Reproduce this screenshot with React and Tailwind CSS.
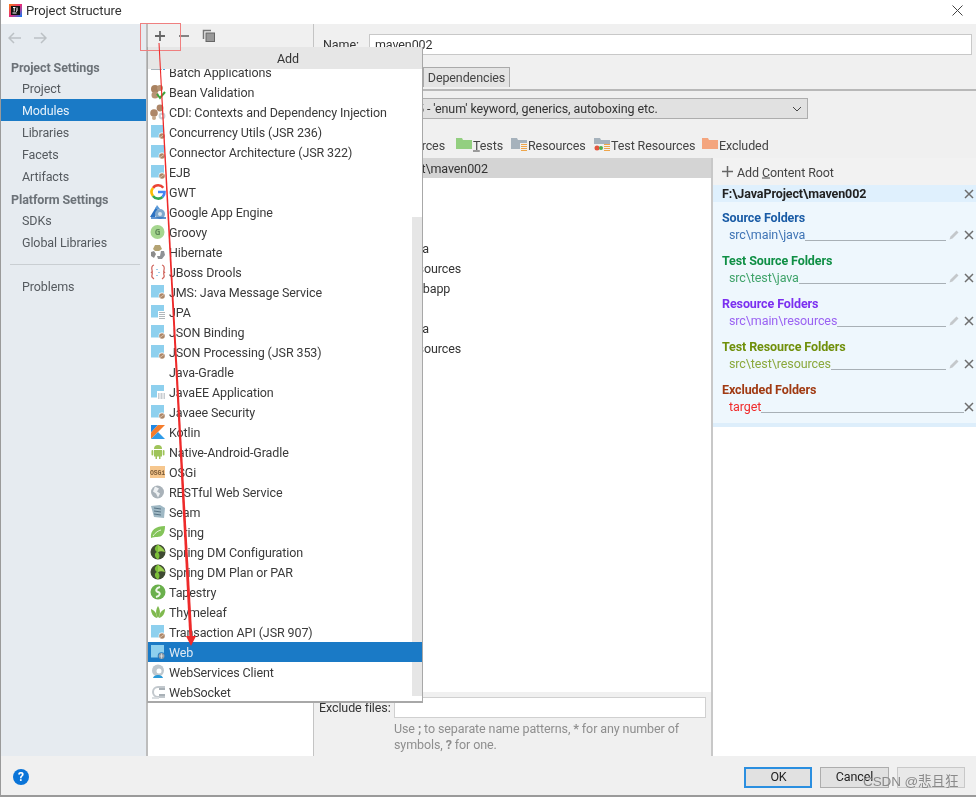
import React from "react";

const font = { fontFamily: 'Roboto,"Open Sans","Noto Sans","Liberation Sans",sans-serif' };

const Mod = ({ children }) => (
  <svg width="16" height="16" viewBox="0 0 16 16">
    <path d="M1 1h13v12.500H1z" fill="#8ed0ee" />
    {children || <g><circle cx="12" cy="12" r="3.400" fill="#fff" /><circle cx="12" cy="12" r="2.800" fill="#ad8668" /><path d="M10 13.500l4-3" stroke="#e8d8c8" strokeWidth=".7" /></g>}
  </svg>
);
const icons = {
  batch: <svg width="16" height="16" viewBox="0 0 16 16"><path d="M1 0h11v6H1z" fill="#a9b4bc" /><path d="M13 4h2v2h-2z" fill="#4aa8e0" /></svg>,
  bean: <svg width="16" height="16" viewBox="0 0 16 16"><circle cx="5" cy="5" r="4" fill="#a98260" /><circle cx="10" cy="4" r="3" fill="#b79474" /><circle cx="5" cy="11" r="3.500" fill="#b79474" /><path d="M7 10l3 4 5-6" fill="none" stroke="#3aa53a" strokeWidth="2" /></svg>,
  cdi: <svg width="16" height="16" viewBox="0 0 16 16"><circle cx="4" cy="9" r="3.800" fill="#ad8668" /><circle cx="10" cy="4" r="3.400" fill="#ad8668" /><circle cx="4" cy="14" r="2" fill="#c8a98c" /><circle cx="12" cy="12" r="3.400" fill="#c9d0d6" /><circle cx="12" cy="12" r="1.300" fill="#fff" /></svg>,
  mod: <Mod />,
  g: <svg width="16" height="16" viewBox="0 0 16 16" fill="none" strokeWidth="2.600"><path d="M13.300 3.700A6.500 6.500 0 0 0 3 4" stroke="#ea4335" /><path d="M3 4a6.500 6.500 0 0 0 0 8" stroke="#fbbc05" /><path d="M3 12a6.500 6.500 0 0 0 9.500 1" stroke="#34a853" /><path d="M12.500 13A6.500 6.500 0 0 0 14.500 8H8" stroke="#4285f4" /></svg>,
  gae: <svg width="17" height="16" viewBox="0 0 17 16"><path d="M0 13L6 3l2 3-3 7z" fill="#2b72c2" /><path d="M7 1l3 4H5z" fill="#5c9ad8" /><circle cx="10" cy="10" r="5" fill="#7ea7cc" /><circle cx="10" cy="10" r="2" fill="#d9e6f0" /><path d="M1 14h15" stroke="#2b72c2" strokeWidth="1.500" /></svg>,
  groovy: <svg width="16" height="16" viewBox="0 0 16 16"><circle cx="7.500" cy="8" r="7" fill="#a5d68f" /><text x="7.500" y="11" fontSize="8" fontWeight="700" fill="#5f8a58" textAnchor="middle" fontFamily="Open Sans">G</text></svg>,
  hib: <svg width="16" height="16" viewBox="0 0 16 16"><path d="M5 1h5l2 4-3 2H5L3 5z" fill="#b4a373" /><path d="M1 8l3-1 2 3-2 4-3-2z" fill="#8c8c8c" /><path d="M11 7h3l1 4-3 4H8l-1-3h3z" fill="#8f9296" /></svg>,
  drools: <svg width="16" height="16" viewBox="0 0 16 16" fill="none" strokeWidth="1.200"><path d="M4 1Q1 2 2 6T1 8q2 1 1 3t2 4" stroke="#d0645c" /><path d="M12 1q3 1 2 5t1 2q-2 1-1 3t-2 4" stroke="#d0645c" /><path d="M7 5v1M9 8v1M7 11v1" stroke="#5da9d6" /></svg>,
  jpa: <Mod><g><path d="M8 7h8v9H8z" fill="#fff" /><path d="M9 8.500h6M9 10.500h6M9 12.500h6M9 14.500h6" stroke="#b0b6ba" /></g></Mod>,
  none: <span />,
  jee: <Mod><g><path d="M7 7h9v9H7z" fill="#fff" /><path d="M8 9h7v6H8z" fill="#c8ccd0" /><path d="M10 9v6M13 9v6" stroke="#fff" /></g></Mod>,
  kotlin: <svg width="16" height="16" viewBox="0 0 16 16"><path d="M1 1h7L1 8.500z" fill="#1e88e5" /><path d="M8 1h7L1 15V8.500z" fill="#f57c2c" /><path d="M1 15l7-7 7 7z" fill="#2f9be8" /></svg>,
  android: <svg width="16" height="16" viewBox="0 0 16 16" fill="#9fc45a"><path d="M4 5a4 4 0 0 1 8 0z" /><path d="M4 6h8v6.500H10.500V15H9v-2.500H7V15H5.500v-2.500H4z" /><rect x="1.500" y="6" width="1.800" height="5.500" rx=".9" /><rect x="12.700" y="6" width="1.800" height="5.500" rx=".9" /></svg>,
  osgi: <svg width="16" height="16" viewBox="0 0 16 16"><rect x="0" y="2" width="15" height="12" fill="#f6c78e" /><text x="7.500" y="11" fontSize="6.500" fontWeight="700" fill="#7a5a35" textAnchor="middle" fontFamily="Liberation Mono">OSGi</text></svg>,
  globe: <svg width="16" height="16" viewBox="0 0 16 16"><circle cx="7.500" cy="8" r="6.500" fill="#a9b2b9" /><path d="M5 2.500l4 2-2 3 3 2-2 4-2-4-3-2z" fill="#eef1f3" /></svg>,
  seam: <svg width="17" height="16" viewBox="0 0 17 16"><path d="M1 2l9-1 5 3-1 10-10-1z" fill="#9fb8c4" /><path d="M4 4l7 1M4 7l7 1M4 10l7 1" stroke="#577384" strokeWidth="1" /></svg>,
  spring: <svg width="16" height="16" viewBox="0 0 16 16"><path d="M1 14C0 6 6 2 15 2c0 8-3 11-8 11-2 0-4 0-6 1z" fill="#84c45a" /><path d="M3 12c3-4 5-5 8-6" stroke="#eaf5e0" fill="none" /></svg>,
  dm: <svg width="16" height="16" viewBox="0 0 16 16"><circle cx="8" cy="8" r="7.500" fill="#3f4a33" /><path d="M8 .5C4 3 4 6 7 8 4 9 4 13 8 15.500c2-2 2-5 0-7.500 3-2 3-5 0-7.500z" fill="#7cbf3a" /><path d="M8 1c4 2 6 4 7 7-3-1-5-1-7 0z" fill="#9ad14f" /></svg>,
  tapestry: <svg width="16" height="16" viewBox="0 0 16 16"><circle cx="8" cy="8" r="7.500" fill="#6ab04c" /><path d="M10 3C6 4 5 7 8 8s2 4-2 5" stroke="#eef7e8" strokeWidth="2" fill="none" /></svg>,
  thyme: <svg width="16" height="16" viewBox="0 0 16 16" fill="#7fb94e"><path d="M8 14C5 10 6 5 8 2c2 3 3 8 0 12z" /><path d="M7 14C3 13 1 9 1 5c3 1 6 4 6 9z" /><path d="M9 14c4-1 6-5 6-9-3 1-6 4-6 9z" /></svg>,
  web: <Mod><g><circle cx="11.500" cy="12" r="3.800" fill="#1a7ac6" /><circle cx="11.500" cy="12" r="3" fill="#8f9aa3" /><path d="M9.500 12h4M11.500 9.500v5" stroke="#e6e9eb" strokeWidth=".7" /></g></Mod>,
  wsc: <svg width="16" height="16" viewBox="0 0 16 16"><circle cx="8" cy="6.500" r="6" fill="#bfc7cd" /><circle cx="9" cy="7" r="2.500" fill="#fff" /><path d="M3 14c1-3 4-3 5-3s4 0 5 3z" fill="#2d9bd8" /></svg>,
  ws: <svg width="17" height="16" viewBox="0 0 17 16" fill="none"><path d="M15 3H8a5 5 0 0 0 0 10h7" stroke="#c2c8cd" strokeWidth="2" /><path d="M9 5h6M9 11h6" stroke="#a9b1b7" strokeWidth="2" /><path d="M2 14h7" stroke="#d9dde0" strokeWidth="2" /></svg>,
};

const items = [
  ["Batch Applications", "batch"], ["Bean Validation", "bean"], ["CDI: Contexts and Dependency Injection", "cdi"],
  ["Concurrency Utils (JSR 236)", "mod"], ["Connector Architecture (JSR 322)", "mod"], ["EJB", "mod"], ["GWT", "g"],
  ["Google App Engine", "gae"], ["Groovy", "groovy"], ["Hibernate", "hib"], ["JBoss Drools", "drools"],
  ["JMS: Java Message Service", "mod"], ["JPA", "jpa"], ["JSON Binding", "mod"], ["JSON Processing (JSR 353)", "mod"],
  ["Java-Gradle", "none"], ["JavaEE Application", "jee"], ["Javaee Security", "mod"], ["Kotlin", "kotlin"],
  ["Native-Android-Gradle", "android"], ["OSGi", "osgi"], ["RESTful Web Service", "globe"], ["Seam", "seam"],
  ["Spring", "spring"], ["Spring DM Configuration", "dm"], ["Spring DM Plan or PAR", "dm"], ["Tapestry", "tapestry"],
  ["Thymeleaf", "thyme"], ["Transaction API (JSR 907)", "mod"], ["Web", "web"], ["WebServices Client", "wsc"], ["WebSocket", "ws"],
];

const folders = [
  ["Source Folders", "src\\main\\java", "text-[#1a5ca6]", "text-[#3f74b5]"],
  ["Test Source Folders", "src\\test\\java", "text-[#0f8f45]", "text-[#3fa36a]"],
  ["Resource Folders", "src\\main\\resources", "text-[#7b2ff0]", "text-[#9a62f2]"],
  ["Test Resource Folders", "src\\test\\resources", "text-[#6f8f0a]", "text-[#8aa83c]"],
];

const T = ({ children, className = "" }) => <span className={`translate-y-[1px] whitespace-nowrap ${className}`}>{children}</span>;

const Cross = ({ className = "" }) => (
  <svg width="10" height="10" viewBox="0 0 10 10" className={className}><path d="M1 1l8 8M9 1l-8 8" stroke="#6e6e6e" strokeWidth="1.500" /></svg>
);
const Pencil = () => (
  <svg width="11" height="11" viewBox="0 0 11 11"><path d="M0.500 10.500l1-3 6-6 2 2-6 6z" fill="#c4c8cb" /></svg>
);
const Folder = ({ c, extra }) => (
  <svg width="16" height="14" viewBox="0 0 16 14"><path d="M0 1h6l1 2h9v9H0z" fill={c} />{extra}</svg>
);
const lines = <g><path d="M9 6h7v8H9z" fill="#f0f0f0" /><path d="M10 7.500h6M10 9.500h6M10 11.500h6M10 13.500h6" stroke="#eea54a" /></g>;
const testLines = <g><path d="M0 7h16v7H0z" fill="#f0f0f0" /><path d="M10 7.500h6M10 9.500h6M10 11.500h6M10 13.500h6" stroke="#eea54a" /><circle cx="3" cy="11" r="2.500" fill="#e2553d" /><circle cx="7" cy="11" r="2" fill="#4bae4f" /></g>;

const Nav = ({ children, sel }) => (
  <div className={`h-[22px] pl-[21px] flex items-center ${sel ? "bg-[#1a7ac6] text-[#e8f2fa]" : "text-[#555a5f]"}`}><T>{children}</T></div>
);
const Head = ({ children, className = "h-[22px]" }) => <div className={`${className} pl-[10px] flex items-center font-bold text-[#6c7278]`}><T>{children}</T></div>;

export default function App() {
  return (
    <div style={font} className="relative w-[976px] h-[797px] overflow-hidden bg-white text-[12.5px] tracking-[-0.1px] leading-none text-[#3a3a3a] flex flex-col border-l border-[#9a9a9a] blur-[0.45px]">
      {/* title */}
      <div className="h-[24px] flex items-center pl-[8px] pr-[10px] pb-[4px] bg-white shrink-0">
        <svg width="13" height="13" viewBox="0 0 13 13" className="mr-[4px]">
          <defs><linearGradient id="ij" x1="0" y1="0" x2="1" y2="1"><stop offset="0" stopColor="#f97a12" /><stop offset=".5" stopColor="#e62e7b" /><stop offset="1" stopColor="#087cfa" /></linearGradient></defs>
          <rect width="13" height="13" fill="url(#ij)" /><rect x="2" y="2" width="9" height="9" fill="#111" /><path d="M3.500 9h4" stroke="#fff" /><path d="M4 3.500h2.500M5.200 3.500v4M8 3.500v3.500l-1 .5" stroke="#fff" fill="none" />
        </svg>
        <span className="text-[#333] text-[13px]">Project Structure</span>
        <svg width="11" height="11" viewBox="0 0 11 11" className="ml-auto mr-[3px]"><path d="M.5.500l10 10M10.500.500l-10 10" stroke="#444" /></svg>
      </div>

      {/* body */}
      <div className="flex-1 flex min-h-0">
        {/* sidebar */}
        <div className="w-[147px] shrink-0 bg-[#e6ebf0] border-r-2 border-[#bdbdbd]">
          <div className="h-[32px] flex items-center pl-[7px] gap-[11px] pb-[5px]">
            <svg width="14" height="12" viewBox="0 0 14 12" fill="none" stroke="#bcc1c5" strokeWidth="1.500"><path d="M13 6H1M6 1L1 6l5 5" /></svg>
            <svg width="14" height="12" viewBox="0 0 14 12" fill="none" stroke="#bcc1c5" strokeWidth="1.500"><path d="M1 6h12M8 1l5 5-5 5" /></svg>
          </div>
          <Head className="h-[21px] pt-[1px]">Project Settings</Head>
          <Nav>Project</Nav>
          <Nav sel>Modules</Nav>
          <Nav>Libraries</Nav>
          <Nav>Facets</Nav>
          <Nav>Artifacts</Nav>
          <Head className="h-[22px] pt-[2px]">Platform Settings</Head>
          <Nav>SDKs</Nav>
          <Nav>Global Libraries</Nav>
          <div className="h-[1px] bg-[#c9ced2] ml-[9px] mr-[6px] mt-[11px] mb-[10px]" />
          <Nav>Problems</Nav>
        </div>

        {/* module list column */}
        <div className="w-[166px] shrink-0 bg-white border-r border-[#c4c4c4]">
          <div className="h-[23px] bg-[#f0f0f0] flex items-center pl-[6px] gap-[12px]">
            <svg width="12" height="12" viewBox="0 0 12 12"><path d="M6 1v10M1 6h10" stroke="#666" strokeWidth="1.800" /></svg>
            <svg width="12" height="12" viewBox="0 0 12 12"><path d="M1 6h10" stroke="#777" strokeWidth="1.800" /></svg>
            <svg width="14" height="14" viewBox="0 0 14 14" fill="none"><path d="M1.500 10V1.500H9" stroke="#777" strokeWidth="1.500" /><rect x="4" y="4" width="8.500" height="8.500" fill="#999" stroke="#666" /></svg>
          </div>
        </div>

        {/* editor */}
        <div className="flex-1 min-w-0 flex flex-col bg-[#f0f0f0]">
          <div className="h-[42px] shrink-0 flex items-center pl-[9px] pr-[4px] pb-[1px]">
            <span className="w-[46px] text-[#333] translate-y-[1px]">Name:</span>
            <div className="w-[603px] h-[21px] bg-white border border-[#c8c8c8] flex items-center pl-[5px] text-[#333]"><T>maven002</T></div>
          </div>
          <div className="h-[25px] shrink-0 border-b-2 border-[#b8b8b8] flex items-end pl-[109px] pb-[2px]">
            <div className="h-[20px] w-[87px] bg-[#e4e4e4] border border-[#aaa] border-b-0 flex items-center justify-center text-[#444]"><T>Dependencies</T></div>
          </div>
          <div className="h-[67px] shrink-0 flex flex-col">
            <div className="mt-[7px] h-[21px] w-[494px] shrink-0 bg-[#e1e1e1] border border-[#adadad] flex items-center pl-[102px] text-[#333] relative whitespace-nowrap">
              <T>5 - 'enum' keyword, generics, autoboxing etc.</T>
              <svg width="10" height="6" viewBox="0 0 10 6" className="absolute right-[5px] top-[7px]"><path d="M1 1l4 4 4-4" fill="none" stroke="#444" /></svg>
            </div>
            <div className="mt-[18px] flex items-center whitespace-nowrap text-[#444]">
              <span className="w-[142px] text-right pr-[11px] translate-y-[1.5px]">Sources</span>
              <span className="flex items-center gap-[1px] w-[55px]"><Folder c="#93cf80" /><span className="translate-y-[1.5px]"><u>T</u>ests</span></span>
              <span className="flex items-center gap-[1px] w-[83px]"><Folder c="#a6b2bc" extra={lines} /><span className="translate-y-[1.5px]">Resources</span></span>
              <span className="flex items-center gap-[1px] w-[108px]"><Folder c="#a6b2bc" extra={testLines} /><span className="translate-y-[1.5px]">Test Resources</span></span>
              <span className="flex items-center gap-[1px]"><Folder c="#f4a57e" /><span className="translate-y-[1.5px]">Excluded</span></span>
            </div>
          </div>
          <div className="flex-1 flex min-h-0">
            <div className="w-[398px] shrink-0 flex flex-col border-r border-[#c8c8c8]">
              <div className="h-[534px] shrink-0 bg-white">
                <div className="h-[20px] bg-[#d4d4d4] flex items-center pl-[32px] text-[#333] whitespace-nowrap"><T>F:\JavaProject\maven002</T></div>
                <div className="pt-[60px]">
                  {["java", "resources", "webapp", "", "java", "resources"].map((t, i) => (
                    <div key={i} className="h-[20px] flex items-center pl-[93px] text-[#333]"><T>{t}</T></div>
                  ))}
                </div>
              </div>
              <div className="flex items-center pl-[5px] pt-[5px] whitespace-nowrap">
                <span className="w-[75px] text-[#333] translate-y-[1px]">Exclude files:</span>
                <div className="w-[312px] h-[21px] bg-white border border-[#d0d0d0]" />
              </div>
              <div className="pl-[80px] pt-[2px] leading-[16px] text-[#8e8e8e] whitespace-nowrap translate-y-[1px]">
                Use <b>;</b> to separate name patterns, <b>*</b> for any number of<br />symbols, <b>?</b> for one.
              </div>
            </div>
          </div>
        </div>
      </div>

      {/* content root panel */}
      <div className="absolute left-[711px] top-[158px] bottom-[41px] right-0 bg-white border-l border-[#c8c8c8]">
        <div className="h-[27px] bg-[#f2f2f2] flex items-center pl-[9px] gap-[4px] text-[#444]">
          <svg width="11" height="11" viewBox="0 0 11 11"><path d="M5.500 0v11M0 5.500h11" stroke="#666" strokeWidth="1.500" /></svg>
          <span className="translate-y-[1.5px]">Add <u>C</u>ontent Root</span>
        </div>
        <div className="h-[242px] bg-[#eef7fd] border-b-4 border-[#ddeefb]">
          <div className="h-[17px] bg-[#dff0fd] flex items-center pl-[9px] pr-[2px] font-bold text-[#222]">
            <T>F:\JavaProject\maven002</T><Cross className="ml-auto" />
          </div>
          <div className="pt-[4px]">
            {folders.map(([h, p, c1, c2]) => (
              <div key={h} className="h-[43px] pt-[2px]">
                <div className={`h-[19px] pl-[9px] flex items-center font-bold ${c1}`}><T>{h}</T></div>
                <div className="h-[17px] -mt-[1px] pl-[16px] pr-[2px] flex items-center">
                  <T className={c2}>{p}</T>
                  <span className="flex-1 self-end mb-[2px] border-b border-[#a8b0b6]" />
                  <span className="ml-[3px] mr-[4px] flex"><Pencil /></span>
                  <Cross />
                </div>
              </div>
            ))}
            <div className="h-[38px] pt-[2px]">
              <div className="h-[19px] pl-[9px] flex items-center font-bold text-[#a03a12]"><T>Excluded Folders</T></div>
              <div className="h-[16px] pl-[16px] pr-[2px] flex items-center">
                <span className="text-[#f02b2b]">target</span>
                <span className="flex-1 self-end mb-[2px] border-b border-[#a8b0b6]" />
                <Cross />
              </div>
            </div>
          </div>
        </div>
      </div>

      {/* footer */}
      <div className="h-[41px] shrink-0 bg-[#f0f0f0] border-b-2 border-[#9a9a9a] flex items-start pt-[11px] pl-[12px] pr-[11px]">
        <div className="w-[16px] h-[16px] mt-[2px] rounded-full bg-[#0a74d8] text-white font-bold flex items-center justify-center text-[12px]">?</div>
        <div className="ml-auto flex gap-[8px]">
          <div className="w-[68px] h-[21px] bg-[#e1e1e1] border-2 border-[#2b8fe0] flex items-center justify-center text-[#222] pl-[1px]">OK</div>
          <div className="w-[69px] h-[21px] bg-[#e1e1e1] border border-[#adadad] flex items-center justify-center text-[#222]">Cancel</div>
          <div className="w-[68px] h-[21px] bg-[#e8e8e8] border border-[#c8c8c8]" />
        </div>
      </div>

      {/* popup */}
      <div className="absolute left-[146px] top-[47px] w-[276px] h-[656px] bg-white border-l border-r border-b-2 border-[#a8a8a8] flex flex-col">
        <div className="h-[22px] shrink-0 bg-[#e6e6e6] flex items-center justify-center pl-[6px] text-[#333]"><T>Add</T></div>
        <div className="flex-1 min-h-0 relative overflow-hidden">
          <div className="absolute right-0 top-[148px] bottom-[5px] w-[10px] bg-[#e6e6e6]" />
          <div className="-mt-[7px] relative">
            {items.map(([t, ic]) => (
              <div key={t} className={`h-[20px] flex items-center pl-[2px] ${t === "Web" ? "bg-[#1a7ac6] text-[#dfeaf4]" : "text-[#3a3a3a]"}`}>
                <span className="w-[19px] h-[16px] shrink-0 flex items-center">{icons[ic]}</span>
                <T>{t}</T>
              </div>
            ))}
          </div>
        </div>
      </div>

      {/* annotation */}
      <div className="absolute left-[139px] top-[23px] w-[41px] h-[28px] border border-[#ef7f7f]" />
      <svg className="absolute left-0 top-0 pointer-events-none" width="976" height="797">
        <polygon points="157.500,43 158.500,43 191.500,640 188.500,640" fill="#ee2a2a" />
        <polygon points="190,646 185,636 195,636" fill="#ee2a2a" />
      </svg>

      {/* watermark */}
      <div className="absolute left-[862px] top-[775px] text-[13.500px] text-[#8a8a8a] whitespace-nowrap" style={{ fontFamily: '"Liberation Sans","Noto Sans CJK SC",sans-serif' }}>CSDN @悲且狂</div>
    </div>
  );
}
